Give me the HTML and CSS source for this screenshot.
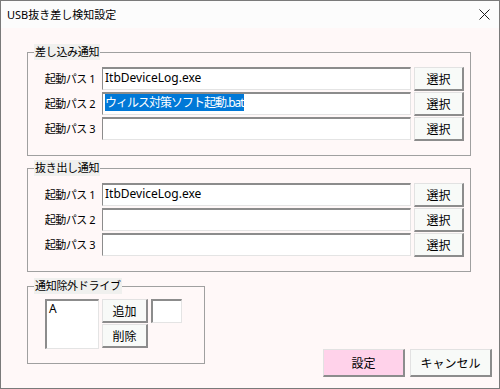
FILE: index.html
```html
<!DOCTYPE html>
<html lang="ja">
<head>
  <meta charset="UTF-8">
  <title>USB抜き差し検知設定</title>
  <link rel="stylesheet" href="styles.css">
</head>
<body>
  <div class="window">
    <!-- Title bar -->
    <div class="titlebar">
      <span class="title">USB抜き差し検知設定</span>
      <svg class="close" width="11" height="11" viewBox="0 0 11 11">
        <path d="M0.5 0.5 L10.5 10.5 M10.5 0.5 L0.5 10.5" stroke="#1b1b1b" stroke-width="1" fill="none"/>
      </svg>
    </div>

    <div class="content">
      <fieldset class="group">
        <legend>差し込み通知</legend>
        <div class="row">
          <label>起動パス 1</label>
          <div class="textbox">ItbDeviceLog.exe</div>
          <button class="btn">選択</button>
        </div>
        <div class="row">
          <label>起動パス 2</label>
          <div class="textbox"><span class="selected">ウィルス対策ソフト起動.bat</span></div>
          <button class="btn">選択</button>
        </div>
        <div class="row">
          <label>起動パス 3</label>
          <div class="textbox"></div>
          <button class="btn">選択</button>
        </div>
      </fieldset>

      <fieldset class="group group-second">
        <legend>抜き出し通知</legend>
        <div class="row">
          <label>起動パス 1</label>
          <div class="textbox">ItbDeviceLog.exe</div>
          <button class="btn">選択</button>
        </div>
        <div class="row">
          <label>起動パス 2</label>
          <div class="textbox"></div>
          <button class="btn">選択</button>
        </div>
        <div class="row">
          <label>起動パス 3</label>
          <div class="textbox"></div>
          <button class="btn">選択</button>
        </div>
      </fieldset>

      <div class="bottom">
        <fieldset class="group drives">
          <legend>通知除外ドライブ</legend>
          <div class="drive-body">
            <div class="listbox">A</div>
            <div class="drive-buttons">
              <button class="btn small">追加</button>
              <button class="btn small">削除</button>
            </div>
            <div class="textbox drive-input"></div>
          </div>
        </fieldset>

        <div class="actions">
          <button class="btn action primary">設定</button>
          <button class="btn action">キャンセル</button>
        </div>
      </div>
    </div>
  </div>
</body>
</html>
```

FILE: styles.css
```css
* {
  box-sizing: border-box;
  font-family: "Noto Sans", "Noto Sans CJK JP", sans-serif;
}

body {
  margin: 0;
  background-color: #fff;
}

.window {
  width: 500px;
  height: 389px;
  border: 1px solid #7a7a7a;
  background-color: #fff8f8;
  display: flex;
  flex-direction: column;
}

.titlebar {
  height: 27px;
  background-color: #fcfcfc;
  display: flex;
  align-items: center;
  justify-content: space-between;
  padding: 0 9px 1px 6px;
}

.title {
  font-size: 11px;
  color: #000;
}

.content {
  padding: 16px 0 0 26px;
}

.group {
  margin: 0;
  padding: 7px 6px 13px 0;
  border: 1px solid #a0a0a0;
  width: 444px;
}

.group legend {
  margin-left: 6px;
  padding: 0 1px;
  height: 16px;
  line-height: 16px;
  font-size: 11px;
  letter-spacing: -0.3px;
  background-color: #f0f0ee;
  color: #000;
}

.group-second {
  margin-top: 4px;
}

.row {
  display: flex;
  align-items: flex-start;
  height: 25px;
}

.row label {
  width: 67px;
  text-align: right;
  font-size: 11px;
  letter-spacing: -0.5px;
  line-height: 23px;
  margin-right: 7px;
  color: #000;
}

.textbox {
  width: 309px;
  height: 23px;
  background-color: #fff;
  border-top: 2px solid #8c8c8c;
  border-left: 1px solid #8c8c8c;
  border-right: 1px solid #e4e4e4;
  border-bottom: 1px solid #e4e4e4;
  font-size: 12px;
  line-height: 18px;
  padding-left: 2px;
  color: #000;
  white-space: nowrap;
  overflow: hidden;
}

.selected {
  background-color: #0078d7;
  color: #fff;
  letter-spacing: -1px;
}

.btn {
  width: 50px;
  height: 24px;
  margin-left: 3px;
  padding: 0;
  background-color: #f8faf8;
  border-top: 1px solid #e2e2e2;
  border-left: 1px solid #e2e2e2;
  border-right: 2px solid #8c8c8c;
  border-bottom: 2px solid #8c8c8c;
  font-size: 12px;
  color: #000;
}

.bottom {
  display: flex;
  align-items: flex-start;
}

.drives {
  width: 178px;
  height: 86px;
  margin-top: 6px;
  padding: 5px 0 0 0;
}

.drive-body {
  display: flex;
  align-items: flex-start;
  padding-left: 17px;
}

.listbox {
  width: 54px;
  height: 50px;
  background-color: #fff;
  border-top: 2px solid #8c8c8c;
  border-left: 2px solid #8c8c8c;
  border-right: 1px solid #e4e4e4;
  border-bottom: 1px solid #e4e4e4;
  font-size: 12px;
  line-height: 14px;
  padding: 1px 0 0 2px;
}

.drive-buttons {
  display: flex;
  flex-direction: column;
  gap: 1px;
}

.btn.small {
  width: 46px;
  height: 24px;
  margin-left: 3px;
}

.drive-input {
  width: 31px;
  height: 24px;
  margin-left: 3px;
  border-left-width: 2px;
}

.actions {
  display: flex;
  gap: 5px;
  margin: 77px 0 0 118px;
}

.btn.action {
  width: 82px;
  height: 28px;
  margin-left: 0;
}

.btn.primary {
  background-color: #ffd2ea;
}
```
